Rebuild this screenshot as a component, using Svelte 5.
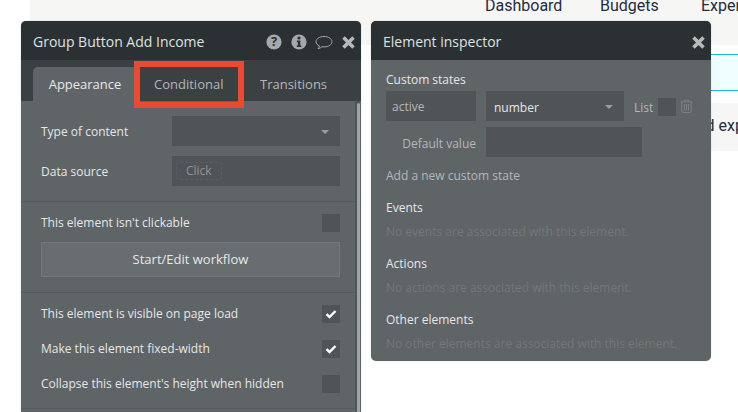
<script lang="ts">
  const sections = [
    { title: 'Events', empty: 'No events are associated with this element.' },
    { title: 'Actions', empty: 'No actions are associated with this element.' },
    { title: 'Other elements', empty: 'No other elements are associated with this element.' }
  ];
</script>

<div class="page">
  <div class="bg-nav">
    <span>Dashboard</span>
    <span>Budgets</span>
    <span>Expenses</span>
  </div>
  <div class="bg-alert"></div>
  <div class="bg-card">Add expense</div>

  <section class="panel left">
    <header>
      <span class="title">Group Button Add Income</span>
      <div class="icons">
        <svg width="16" height="16" viewBox="0 0 16 16">
          <circle cx="8" cy="8" r="7.6" fill="#a4a9ab" />
          <text x="8" y="12.4" text-anchor="middle" class="glyph">?</text>
        </svg>
        <svg width="16" height="16" viewBox="0 0 16 16">
          <circle cx="8" cy="8" r="7.6" fill="#a4a9ab" />
          <circle cx="8" cy="4" r="1.6" fill="#2b3133" />
          <path d="M5.8 6.600h3.500v5h1v1.400H5.800v-1.400h1v-3.600h-1z" fill="#2b3133" />
        </svg>
        <svg class="bubble" width="18" height="16" viewBox="0 0 18 16" fill="none">
          <path d="M9 1.500c4.300 0 8 2.200 8 5.200s-3.700 5.200-8 5.200c-.7 0-1.300 0-2-.2-1 1-2.300 1.700-4 2 .8-.8 1.300-1.800 1.400-2.800C2.400 10 1 8.500 1 6.700 1 3.700 4.700 1.500 9 1.500z" stroke="#a4a9ab" stroke-width="1" />
        </svg>
        <svg class="close" width="13" height="13" viewBox="0 0 13 13">
          <path d="M1.500 1.500l10 10M11.500 1.500l-10 10" stroke="#b6babb" stroke-width="3.600" />
        </svg>
      </div>
    </header>
    <nav class="tabs">
      <div class="tab active">Appearance</div>
      <div class="tab cond">Conditional</div>
      <div class="tab trans">Transitions</div>
    </nav>
    <div class="body">
      <div class="group top">
        <div class="row field">
          <label>Type of content</label>
          <div class="select"><i class="caret"></i></div>
        </div>
        <div class="row field">
          <label>Data source</label>
          <div class="select"><span class="click">Click</span></div>
        </div>
      </div>
      <div class="group mid">
        <div class="row check">
          <label class="up">This element isn't clickable</label>
          <span class="box"></span>
        </div>
        <div class="btn">Start/Edit workflow</div>
      </div>
      <div class="group low">
        <div class="row check">
          <label>This element is visible on page load</label>
          <span class="box">{@render tick()}</span>
        </div>
        <div class="row check">
          <label>Make this element fixed-width</label>
          <span class="box">{@render tick()}</span>
        </div>
        <div class="row check">
          <label>Collapse this element's height when hidden</label>
          <span class="box"></span>
        </div>
      </div>
      <div class="track"><div class="thumb"></div></div>
    </div>
  </section>

  <section class="panel right">
    <header>
      <span class="title">Element inspector</span>
      <svg class="close" width="13" height="13" viewBox="0 0 13 13">
        <path d="M1.500 1.500l10 10M11.500 1.500l-10 10" stroke="#b6babb" stroke-width="3.600" />
      </svg>
    </header>
    <div class="inspector">
      <h4>Custom states</h4>
      <div class="state-row">
        <div class="input name">active</div>
        <div class="input type">number<i class="caret"></i></div>
        <span class="list">List</span>
        <span class="box"></span>
        <svg class="trash" width="13" height="14" viewBox="0 0 13 14" fill="none" stroke="#7d8285" stroke-width="1">
          <path d="M.5 2.800h12M4.500 2.500V1h4v1.500M1.800 3v9.200c0 .8.500 1.300 1.200 1.300h7c.7 0 1.200-.5 1.200-1.300V3M4.500 5v6.500M6.500 5v6.500M8.500 5v6.500" />
        </svg>
      </div>
      <div class="default-row">
        <label>Default value</label>
        <div class="input value"></div>
      </div>
      <div class="add">Add a new custom state</div>
      {#each sections as s}
        <h4 class="sec">{s.title}</h4>
        <p>{s.empty}</p>
      {/each}
    </div>
  </section>
</div>

{#snippet tick()}
  <svg width="12" height="10" viewBox="0 0 12 10">
    <path d="M1.500 5.200l3 2.800 6-6" fill="none" stroke="#fff" stroke-width="2.400" />
  </svg>
{/snippet}

<style>
  :global(body) {
    margin: 0;
    background: #fff;
  }

  .page {
    position: relative;
    width: 738px;
    height: 412px;
    overflow: hidden;
    font-family: "Open Sans", sans-serif;
  }

  /* the app being edited, behind the floating panels */
  .bg-nav {
    position: absolute;
    left: 30px;
    top: 0;
    right: 0;
    height: 45px;
    background: #f6f6f5;
    font: 16px Roboto, sans-serif;
    color: #1f2d3d;
  }

  .bg-nav span {
    position: absolute;
    top: -4px;
    white-space: nowrap;
  }

  .bg-nav span:nth-child(1) { left: 455px; }
  .bg-nav span:nth-child(2) { left: 570px; }
  .bg-nav span:nth-child(3) { left: 671px; }

  .bg-alert {
    position: absolute;
    left: 700px;
    top: 54px;
    right: 0;
    height: 35px;
    background: #eefdfe;
    border-top: 1px solid #17bccb;
    border-bottom: 1px solid #17bccb;
  }

  .bg-card {
    position: absolute;
    left: 650px;
    top: 103px;
    right: 0;
    height: 48px;
    padding-left: 36px;
    box-sizing: border-box;
    background: #f6f6f5;
    font: 16px/46px Roboto, sans-serif;
    color: #1f2d3d;
    white-space: nowrap;
  }

  /* floating windows */
  .panel {
    position: absolute;
    background: #5f6467;
    border-radius: 5px;
    color: #e6e7e8;
    font-size: 12px;
    box-shadow: 0 0 2px rgba(0, 0, 0, 0.15);
  }

  .left {
    left: 21px;
    top: 21px;
    width: 340px;
    height: 420px;
  }

  .right {
    left: 371px;
    top: 21px;
    width: 340px;
    height: 340px;
  }

  header {
    display: flex;
    align-items: center;
    justify-content: space-between;
    height: 39px;
    padding: 2px 6px 0 12px;
    background: #2b3133;
    border-radius: 5px 5px 0 0;
    box-sizing: border-box;
  }

  .title {
    font-size: 14px;
    color: #dfe1e1;
  }

  .icons {
    display: flex;
    align-items: center;
    gap: 9px;
    margin-left: -1px;
  }

  .glyph {
    font: 700 13px "Open Sans", sans-serif;
    fill: #2b3133;
  }

  .bubble {
    margin-left: -1px;
    margin-top: 2px;
  }

  .close {
    margin-top: 2px;
    display: block;
  }

  .tabs {
    position: relative;
    display: flex;
    height: 41px;
    background: #3b4043;
    font-size: 13px;
  }

  .tab {
    position: absolute;
    top: 7px;
    height: 34px;
    line-height: 34px;
    color: #b4b7b9;
    white-space: nowrap;
  }

  .active {
    left: 12px;
    width: 104px;
    text-align: center;
    background: #5f6467;
    color: #e8e9ea;
    border-radius: 5px 5px 0 0;
  }

  .cond {
    left: 133px;
  }

  .cond::after {
    content: "";
    position: absolute;
    left: -20px;
    top: -6px;
    width: 98px;
    height: 35px;
    border: 6px solid #ea4a33;
  }

  .trans {
    left: 239px;
  }

  .body {
    position: relative;
  }

  .group {
    padding: 15px 15px 0 20px;
    border-bottom: 1px solid #565b5e;
    margin-right: 6px;
  }

  .top {
    height: 85px;
    display: flex;
    flex-direction: column;
    gap: 10px;
  }

  .mid {
    height: 78px;
    padding-top: 12px;
  }

  .low {
    height: 104px;
    padding-top: 11px;
  }

  .low .box {
    margin-top: 2px;
  }

  .row {
    display: flex;
    align-items: center;
    justify-content: space-between;
  }

  .field {
    height: 30px;
  }

  .select {
    position: relative;
    display: flex;
    align-items: center;
    width: 168px;
    height: 30px;
    background: #505457;
    color: #8f9395;
  }

  .caret {
    position: absolute;
    right: 11px;
    top: 14px;
    width: 0;
    height: 0;
    border: 4px solid transparent;
    border-top: 4px solid #9a9ea0;
    border-bottom: 0;
  }

  .click {
    margin-left: 4px;
    padding: 0 9px;
    line-height: 16px;
    border: 1px dashed #5b5f62;
    border-radius: 4px;
  }

  .check {
    height: 18px;
  }

  .check + .check {
    margin-top: 17px;
  }

  .up {
    margin-top: -2px;
  }

  .box {
    display: flex;
    align-items: center;
    justify-content: center;
    width: 18px;
    height: 18px;
    background: #505457;
  }

  .btn {
    margin-top: 10px;
    height: 35px;
    line-height: 33px;
    text-align: center;
    background: #686d70;
    border: 1px solid #74787b;
    box-sizing: border-box;
    font-size: 13px;
  }

  .track {
    position: absolute;
    right: 1px;
    top: 0;
    width: 5px;
    height: 420px;
    background: #505457;
  }

  .thumb {
    width: 3px;
    height: 400px;
    margin: 2px 0 0 2px;
    border-radius: 2px;
    background: #a0a4a6;
  }

  .inspector {
    padding: 11px 15px 0;
  }

  h4 {
    margin: 0;
    font-size: 12px;
    font-weight: 400;
    line-height: 17px;
    color: #e6e7e8;
  }

  .state-row {
    display: flex;
    align-items: center;
    height: 30px;
    margin-top: 3px;
  }

  .input {
    position: relative;
    height: 30px;
    line-height: 34px;
    background: #505457;
    box-sizing: border-box;
  }

  .name {
    width: 90px;
    padding-left: 6px;
    line-height: 32px;
    color: #b4b7b9;
  }

  .type {
    width: 138px;
    margin-left: 10px;
    padding-left: 8px;
    color: #e6e7e8;
  }

  .list {
    margin: 2px 0 0 10px;
    color: #b4b7b9;
  }

  .state-row .box {
    margin: 2px 0 0 5px;
  }

  .trash {
    margin-left: 4px;
  }

  .default-row {
    display: flex;
    align-items: center;
    justify-content: flex-end;
    width: 256px;
    margin-top: 6px;
  }

  .default-row label {
    margin: 2px 10px 0 0;
    color: #b4b7b9;
  }

  .value {
    width: 156px;
  }

  .add {
    margin-top: 10px;
    line-height: 17px;
    color: #b4b7b9;
  }

  .sec {
    margin-top: 15px;
  }

  p {
    margin: 7px 0 0;
    line-height: 17px;
    color: #74787b;
  }
</style>
